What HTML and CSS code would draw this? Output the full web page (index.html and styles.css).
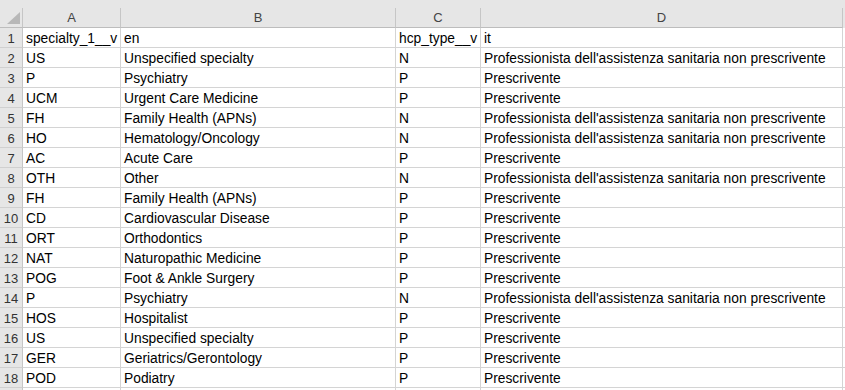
FILE: index.html
```html
<!DOCTYPE html>
<html>
<head>
<meta charset="utf-8">
<link rel="stylesheet" href="styles.css">
</head>
<body>
<div class="sheet">
  <div class="topstrip"></div>
  <div class="row head">
    <div class="cell corner"><svg class="tri" width="22" height="19" viewBox="0 0 22 19"><polygon points="7,16 20,16 20,4" fill="#b8b8b8"/></svg></div>
    <div class="cell colh">A</div>
    <div class="cell colh">B</div>
    <div class="cell colh">C</div>
    <div class="cell colh">D</div>
    <div class="cell rest"></div>
  </div>
  <div class="row"><div class="cell rn">1</div><div class="cell">specialty_1__v</div><div class="cell">en</div><div class="cell">hcp_type__v</div><div class="cell">it</div><div class="cell rest"></div></div>
  <div class="row"><div class="cell rn">2</div><div class="cell">US</div><div class="cell">Unspecified specialty</div><div class="cell">N</div><div class="cell">Professionista dell'assistenza sanitaria non prescrivente</div><div class="cell rest"></div></div>
  <div class="row"><div class="cell rn">3</div><div class="cell">P</div><div class="cell">Psychiatry</div><div class="cell">P</div><div class="cell">Prescrivente</div><div class="cell rest"></div></div>
  <div class="row"><div class="cell rn">4</div><div class="cell">UCM</div><div class="cell">Urgent Care Medicine</div><div class="cell">P</div><div class="cell">Prescrivente</div><div class="cell rest"></div></div>
  <div class="row"><div class="cell rn">5</div><div class="cell">FH</div><div class="cell">Family Health (APNs)</div><div class="cell">N</div><div class="cell">Professionista dell'assistenza sanitaria non prescrivente</div><div class="cell rest"></div></div>
  <div class="row"><div class="cell rn">6</div><div class="cell">HO</div><div class="cell">Hematology/Oncology</div><div class="cell">N</div><div class="cell">Professionista dell'assistenza sanitaria non prescrivente</div><div class="cell rest"></div></div>
  <div class="row"><div class="cell rn">7</div><div class="cell">AC</div><div class="cell">Acute Care</div><div class="cell">P</div><div class="cell">Prescrivente</div><div class="cell rest"></div></div>
  <div class="row"><div class="cell rn">8</div><div class="cell">OTH</div><div class="cell">Other</div><div class="cell">N</div><div class="cell">Professionista dell'assistenza sanitaria non prescrivente</div><div class="cell rest"></div></div>
  <div class="row"><div class="cell rn">9</div><div class="cell">FH</div><div class="cell">Family Health (APNs)</div><div class="cell">P</div><div class="cell">Prescrivente</div><div class="cell rest"></div></div>
  <div class="row"><div class="cell rn">10</div><div class="cell">CD</div><div class="cell">Cardiovascular Disease</div><div class="cell">P</div><div class="cell">Prescrivente</div><div class="cell rest"></div></div>
  <div class="row"><div class="cell rn">11</div><div class="cell">ORT</div><div class="cell">Orthodontics</div><div class="cell">P</div><div class="cell">Prescrivente</div><div class="cell rest"></div></div>
  <div class="row"><div class="cell rn">12</div><div class="cell">NAT</div><div class="cell">Naturopathic Medicine</div><div class="cell">P</div><div class="cell">Prescrivente</div><div class="cell rest"></div></div>
  <div class="row"><div class="cell rn">13</div><div class="cell">POG</div><div class="cell">Foot &amp; Ankle Surgery</div><div class="cell">P</div><div class="cell">Prescrivente</div><div class="cell rest"></div></div>
  <div class="row"><div class="cell rn">14</div><div class="cell">P</div><div class="cell">Psychiatry</div><div class="cell">N</div><div class="cell">Professionista dell'assistenza sanitaria non prescrivente</div><div class="cell rest"></div></div>
  <div class="row"><div class="cell rn">15</div><div class="cell">HOS</div><div class="cell">Hospitalist</div><div class="cell">P</div><div class="cell">Prescrivente</div><div class="cell rest"></div></div>
  <div class="row"><div class="cell rn">16</div><div class="cell">US</div><div class="cell">Unspecified specialty</div><div class="cell">P</div><div class="cell">Prescrivente</div><div class="cell rest"></div></div>
  <div class="row"><div class="cell rn">17</div><div class="cell">GER</div><div class="cell">Geriatrics/Gerontology</div><div class="cell">P</div><div class="cell">Prescrivente</div><div class="cell rest"></div></div>
  <div class="row"><div class="cell rn">18</div><div class="cell">POD</div><div class="cell">Podiatry</div><div class="cell">P</div><div class="cell">Prescrivente</div><div class="cell rest"></div></div>
  <div class="row"><div class="cell rn"></div><div class="cell"></div><div class="cell"></div><div class="cell"></div><div class="cell"></div><div class="cell rest"></div></div>
</div>
</body>
</html>
```
FILE: styles.css
```css
html, body {
  margin: 0;
  padding: 0;
  background: #ffffff;
  overflow: hidden;
}
.sheet {
  width: 845px;
  height: 390px;
  overflow: hidden;
  font-family: "Liberation Sans", Arial, sans-serif;
  font-size: 13.8px;
  color: #000;
}
.topstrip {
  height: 8px;
  background: #e6e6e6;
}
.row {
  display: grid;
  grid-template-columns: 23px 98px 275px 85px 362px 2px;
  height: 20px;
}
.cell {
  box-sizing: border-box;
  height: 20px;
  border-right: 1px solid #d4d4d4;
  border-bottom: 1px solid #d4d4d4;
  padding: 1px 0 0 3px;
  line-height: 19px;
  white-space: nowrap;
  overflow: hidden;
}
.cell.rest {
  border-right: none;
  padding: 0;
}
.head .cell {
  background: #e6e6e6;
  border-right-color: #c6c6c6;
  border-bottom-color: #bdbdbd;
  color: #444;
}
.head .cell.rest {
  border-bottom-color: #e6e6e6;
}
.corner {
  padding: 0;
  position: relative;
}
.tri {
  display: block;
}
.colh {
  text-align: center;
  padding: 0;
  font-size: 13px;
}
.rn {
  background: #e6e6e6;
  border-right-color: #c6c6c6;
  border-bottom-color: #d0d0d0;
  text-align: center;
  padding: 1px 0 0 0;
  color: #333;
  font-size: 13px;
}
```
